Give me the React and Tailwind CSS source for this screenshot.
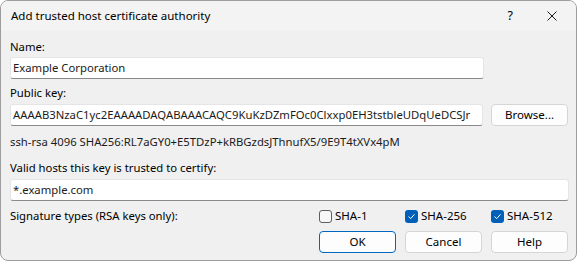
import React from 'react';

const font = { fontFamily: '"Segoe UI", "Noto Sans", "Open Sans", sans-serif' };

function TextBox({ value, className = '' }) {
  return (
    <div className={`h-[22px] bg-white border border-[#e5e5e5] border-b-[#8a8a8a] rounded-[3px] px-[2px] flex items-center overflow-hidden whitespace-nowrap text-[11.3px] text-[#1b1b1b] ${className}`}>
      {value}
    </div>
  );
}

function Button({ children, primary }) {
  return (
    <button
      className={`w-[77px] h-[22px] rounded-[4px] bg-[#fdfdfd] text-[11.5px] text-black flex items-center justify-center border ${
        primary ? 'border-[#0067c0]' : 'border-[#d5d5d5]'
      }`}
    >
      {children}
    </button>
  );
}

function Check({ checked, label, className = '' }) {
  return (
    <label className={`flex items-center gap-[3px] text-[11.5px] text-black ${className}`}>
      {checked ? (
        <span className="w-[13px] h-[13px] rounded-[3px] bg-[#005fb8] flex items-center justify-center">
          <svg width="9" height="9" viewBox="0 0 9 9" fill="none">
            <path d="M1.8 4.8 L3.7 6.6 L7.2 2.6" stroke="white" strokeWidth="1" strokeLinecap="round" strokeLinejoin="round" />
          </svg>
        </span>
      ) : (
        <span className="w-[13px] h-[13px] rounded-[3px] bg-[#f7f7f7] border border-[#5e5e5e]" />
      )}
      <span>{label}</span>
    </label>
  );
}

export default function App() {
  return (
    <div className="w-[579px] h-[263px] bg-white" style={font}>
      <div className="w-[577px] h-[261px] rounded-[8px] border border-[#9d9d9d] overflow-hidden flex flex-col bg-[#f0f0f0]">
        {/* title bar */}
        <div className="h-[30px] bg-[#f3f3f3] flex items-center shrink-0">
          <span className="ml-[10px] text-[11.5px] text-black">Add trusted host certificate authority</span>
          <span className="ml-auto mr-[34px] text-[12.5px] text-black">?</span>
          <svg className="mr-[19px]" width="10" height="10" viewBox="0 0 10 10">
            <path d="M0.5 0.5 L9.5 9.5 M9.5 0.5 L0.5 9.5" stroke="#1b1b1b" strokeWidth="1" />
          </svg>
        </div>

        {/* body */}
        <div className="flex flex-col pl-[9px] pr-[8px] pt-[8px] text-[11.3px] text-black">
          <div className="h-[16px] leading-[16px]">Name:</div>
          <TextBox value="Example Corporation" className="mt-[2px] w-[474px]" />

          <div className="h-[16px] leading-[16px] mt-[6px]">Public key:</div>
          <div className="mt-[3px] flex gap-[8px]">
            <TextBox
              value="AAAAB3NzaC1yc2EAAAADAQABAAACAQC9KuKzDZmFOc0Clxxp0EH3tstbleUDqUeDCSJr"
              className="w-[474px]"
            />
            <Button>Browse...</Button>
          </div>

          <div className="h-[16px] leading-[16px] mt-[8px] text-[#1b1b1b]">
            ssh-rsa 4096 SHA256:RL7aGY0+E5TDzP+kRBGzdsJThnufX5/9E9T4tXVx4pM
          </div>

          <div className="h-[16px] leading-[16px] mt-[10px]">Valid hosts this key is trusted to certify:</div>
          <TextBox value="*.example.com" className="mt-[3px] w-[559px]" />

          <div className="h-[16px] mt-[7px] flex items-center">
            <span>Signature types (RSA keys only):</span>
            <Check label="SHA-1" className="ml-auto w-[86px]" />
            <Check checked label="SHA-256" className="w-[86px]" />
            <Check checked label="SHA-512" className="w-[77px]" />
          </div>

          <div className="mt-[7px] flex justify-end gap-[9px]">
            <Button primary>OK</Button>
            <Button>Cancel</Button>
            <Button>Help</Button>
          </div>
        </div>
      </div>
    </div>
  );
}
